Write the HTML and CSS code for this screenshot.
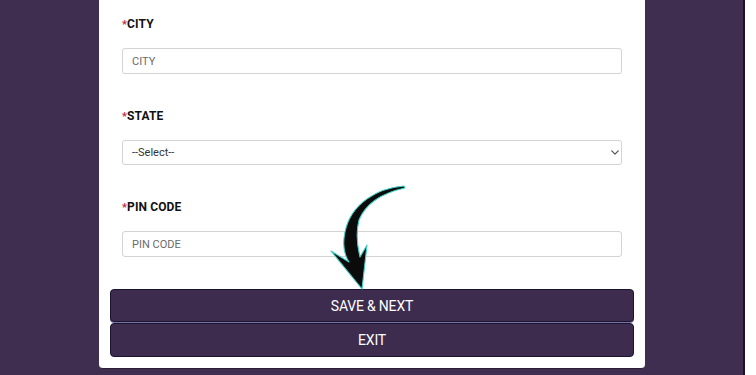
FILE: index.html
```html
<!DOCTYPE html>
<html lang="en">
<head>
<meta charset="utf-8">
<title>Address form</title>
<link rel="stylesheet" href="styles.css">
</head>
<body>
<div class="screen">
  <div class="stage">
    <form class="card">
      <div class="field">
        <label class="label" for="city"><span class="req">*</span>CITY</label>
        <input class="input" id="city" type="text" placeholder="CITY">
      </div>
      <div class="field">
        <label class="label" for="state"><span class="req">*</span>STATE</label>
        <div class="select-wrap">
          <select class="input select" id="state">
            <option>--Select--</option>
          </select>
          <svg class="chev" viewBox="0 0 10 6" width="8" height="5"><path d="M1 1 L5 5 L9 1" fill="none" stroke="#555" stroke-width="1.6" stroke-linecap="round" stroke-linejoin="round"/></svg>
        </div>
      </div>
      <div class="field">
        <label class="label" for="pin"><span class="req">*</span>PIN CODE</label>
        <input class="input" id="pin" type="text" placeholder="PIN CODE">
      </div>
      <div class="actions">
        <button type="button" class="btn btn-first">SAVE &amp; NEXT</button>
        <button type="button" class="btn">EXIT</button>
      </div>
    </form>
  </div>
  <div class="edge"></div>
  <svg class="arrow" viewBox="0 0 756 375" width="756" height="375" aria-hidden="true">
    <path d="M404,186 C378,188 351,203 345,232 C342,246 345,256 349,262 L331,251 L362,289 L367,245 L360,257 C357,245 356,232 359,220 C366,203 382,193 405,188 Z" fill="#0b0b0b" stroke="#42cfc6" stroke-width="1.1" stroke-linejoin="round"/>
  </svg>
</div>
</body>
</html>
```

FILE: styles.css
```css
* { box-sizing: border-box; }

html, body {
  margin: 0;
  padding: 0;
  background: #3f2e50;
  font-family: Roboto, "Liberation Sans", Arial, sans-serif;
}

.screen {
  position: relative;
  display: flex;
  width: 756px;
  height: 375px;
  overflow: hidden;
}

.stage {
  flex: 1;
  background: #3f2e50;
  padding-left: 99px;
}

.edge {
  width: 13px;
  background: #ffffff;
  border-left: 2px solid #1c1226;
}

.card {
  width: 546px;
  height: 369px;
  background: #ffffff;
  border-radius: 0 0 4px 4px;
  border-bottom: 1px solid #2a1e36;
  padding: 17px 23px 0 23px;
  display: flex;
  flex-direction: column;
}

.field {
  display: flex;
  flex-direction: column;
  margin-bottom: 35px;
}

.label {
  font-size: 12px;
  line-height: 14px;
  font-weight: 700;
  color: #111;
  margin-bottom: 16px;
  letter-spacing: 0.1px;
}

.req {
  color: #c0283a;
  font-weight: 700;
  font-size: 11px;
}

.input {
  width: 500px;
  height: 26px;
  border: 1px solid #d3d3d3;
  border-radius: 3px;
  padding: 0 9px;
  font-family: Roboto, "Liberation Sans", Arial, sans-serif;
  font-size: 11px;
  color: #333;
  background: #fff;
  outline: none;
}

.input::placeholder {
  color: #6a6a6a;
}

.select-wrap {
  position: relative;
  width: 500px;
}

.select {
  appearance: none;
  -webkit-appearance: none;
  height: 25px;
  color: #333;
}

.chev {
  position: absolute;
  right: 3px;
  top: 10px;
}

.actions {
  display: flex;
  flex-direction: column;
  margin: -3px -12px 0 -12px;
  gap: 1px;
}

.btn {
  height: 34px;
  width: 100%;
  background: #3d2c4e;
  border: 1px solid #1b1430;
  border-radius: 4px;
  color: #ffffff;
  font-family: Roboto, "Liberation Sans", Arial, sans-serif;
  font-size: 14px;
  letter-spacing: -0.2px;
  cursor: pointer;
}

.btn-first {
  height: 33px;
  box-shadow: 0 1px 0 #7b73a4;
}

.arrow {
  position: absolute;
  left: 0;
  top: 0;
  pointer-events: none;
}
```
